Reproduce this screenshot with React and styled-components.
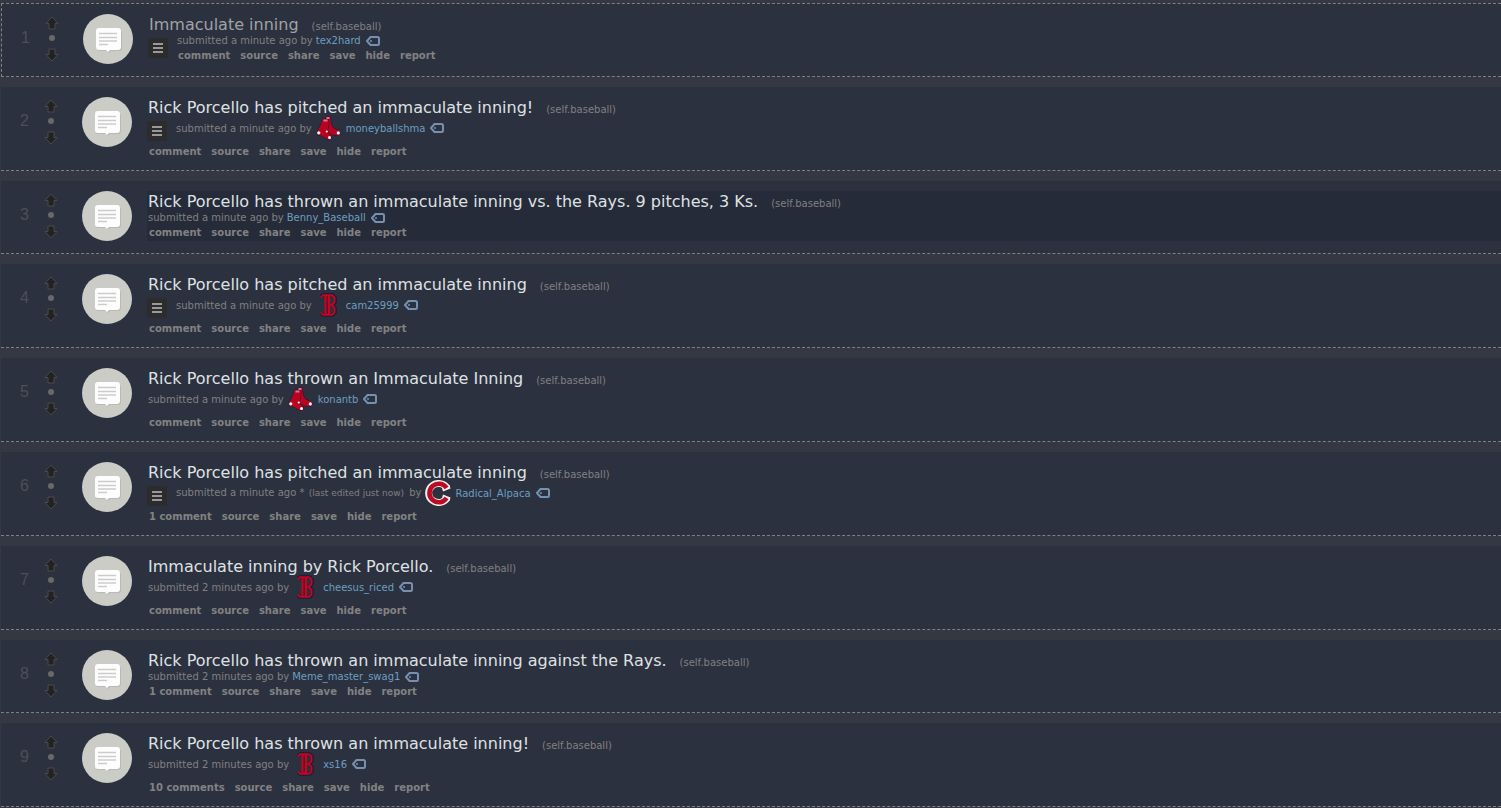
import React from "react";
import styled, { createGlobalStyle } from "styled-components";

const GlobalStyle = createGlobalStyle`
  * {
    box-sizing: border-box;
  }

  body {
    margin: 0;
    background: #333843;
    color: #808080;
    font-family: Verdana, "DejaVu Sans", sans-serif;
    font-size: 10px;
  }

  a {
    color: inherit;
    text-decoration: none;
  }

  button {
    margin: 0;
    padding: 0;
    border: 0;
    background: none;
    cursor: pointer;
  }

  svg {
    display: block;
    flex: none;
  }
`;

const Listing = styled.main`
  display: flex;
  flex-direction: column;
  gap: 10px;
  padding: 3px 0 0 1px;
`;

const Post = styled.article`
  display: flex;
  align-items: flex-start;
  padding: 10px 0 12px;
  background: #2c313f;
  border: 0 dashed #808080;
  border-width: ${(props) => (props.$selected ? "1px 0 1px 1px" : "0 0 1px")};
`;

const Rank = styled.span`
  width: 28px;
  line-height: 48px;
  text-align: right;
  color: #4c4f56;
  font-family: "Liberation Sans", Arial, sans-serif;
  font-size: 16px;
`;

const Votes = styled.div`
  display: flex;
  flex-direction: column;
  align-items: center;
  justify-content: space-between;
  width: 14px;
  height: 46px;
  margin: 2px 24px 0 15px;
`;

const Score = styled.span`
  width: 6px;
  height: 6px;
  margin-bottom: 2px;
  border-radius: 50%;
  background: #696969;
`;

const Thumbnail = styled.a`
  display: flex;
  flex: none;
  align-items: center;
  justify-content: center;
  width: 50px;
  height: 50px;
  margin-right: 15px;
  border-radius: 50%;
  background: #cbccc6;
`;

const Entry = styled.div`
  flex: 1;
  min-width: 0;
  min-height: 50px;
  background: ${(props) => (props.$active ? "#262b39" : "transparent")};
`;

const Title = styled.h2`
  display: flex;
  align-items: baseline;
  height: 19px;
  margin: 0;
  padding-left: 1px;
  color: ${(props) => (props.$read ? "#a0a2a5" : "#dfe1e3")};
  font-size: 16px;
  font-weight: normal;
  line-height: 22px;
  white-space: nowrap;
`;

const Domain = styled.a`
  margin-left: 13px;
  color: #808080;
  font-size: 10px;
`;

const Expando = styled.button`
  float: left;
  display: flex;
  flex-direction: column;
  align-items: center;
  justify-content: center;
  gap: 2px;
  width: 20px;
  height: 20px;
  margin: 5px 8px 0 0;

  && {
    background: #2c2c2d;
  }
`;

const Bar = styled.span`
  width: 10px;
  height: 2px;
  background: #999;
`;

const Tagline = styled.p`
  display: flex;
  align-items: center;
  height: ${(props) => (props.$tall ? "24px" : "15px")};
  margin: 0 0 ${(props) => (props.$tall ? "4px" : "0")};
  padding-left: 1px;
  line-height: 13px;
  white-space: pre;
`;

const Edited = styled.time`
  margin: 0 2px 0 1px;
  font-size: 9px;
`;

const Author = styled.a`
  margin: 0 5px 0 ${(props) => (props.$flair ? "4px" : "3px")};
  color: #6a9fc0;
`;

const Flair = styled.span`
  display: flex;
  justify-content: center;
  width: 26px;
  margin-left: 4px;
`;

const Actions = styled.ul`
  display: flex;
  gap: 10px;
  height: 14px;
  margin: 0;
  padding: 0 0 0 2px;
  color: #828282;
  font-weight: bold;
  line-height: 16px;
  list-style: none;
`;

const ArrowIcon = ({ down }) => (
  <svg width="14" height="14" viewBox="0 0 14 14">
    <path
      d="M7 1L13 7.500H10V13H4V7.500H1Z"
      transform={down ? "rotate(180 7 7)" : undefined}
      fill="#222"
      stroke="#4a4a48"
    />
  </svg>
);

const TextPostIcon = () => (
  <svg width="28" height="28" viewBox="-2 -2 28 28">
    <path d="M3 3H23Q26 3 26 6V21Q26 24 23 24H15L13 26L11 24H3Q1 24 1 22Z" fill="#b9bab5" />
    <path d="M3 1H22Q25 1 25 4V20Q25 23 22 23H14L12 25L10 23H3Q0 23 0 20V4Q0 1 3 1Z" fill="#fdfdfd" />
    <path d="M3 6.500H21M3 10.500H21M3 14H21M3 17.500H12" stroke="#cccdcb" strokeWidth="1.500" />
  </svg>
);

const TagIcon = () => (
  <svg width="14" height="10" viewBox="0 0 14 10">
    <path d="M4.500 1H11.500Q13 1 13 2.500V7.500Q13 9 11.500 9H4.500L1 5Z" fill="none" stroke="#7590b0" strokeWidth="2" />
    <circle cx="5" cy="5" r="1" fill="#7590b0" />
  </svg>
);

const SocksIcon = () => (
  <svg width="26" height="24" viewBox="0 0 26 24">
    <g fill="#b8041f" stroke="#17173c" paintOrder="stroke">
      <path d="M10 1L14 .5L15.500 9Q17 13 22.500 14.500Q25 16.500 23 19Q17 20 13 17L10 15Z" />
      <path d="M6.500 3L12.500 3.500Q13.500 8 12 12Q11 15 12 16.500L15 20Q16.500 22.500 13.500 23.500Q9 22.500 6 20L1.500 18.500Q.5 16 2 14Q5.500 9 6.500 3Z" />
    </g>
    <path d="M7.500 4.500H11.500M10.500 2H13.500" stroke="#d9728a" strokeWidth="2" />
    <circle cx="2.800" cy="16.800" r="1.600" fill="#fff" />
    <circle cx="13.500" cy="21.500" r="1.500" fill="#fff" />
    <circle cx="10.800" cy="15.500" r="1.100" fill="#fff" />
    <circle cx="22.300" cy="16.900" r="1.600" fill="#fff" />
  </svg>
);

const BostonIcon = () => (
  <svg width="18" height="24" viewBox="0 0 18 24">
    <g fill="none">
      <path
        d="M1 4L3 2H12.500L15 4.500V9L12.500 12L15 15V19.500L12.500 22H3L1 20M7 2V22"
        stroke="#171b3d"
        strokeWidth="3.500"
      />
      <path d="M7.200 2V22" stroke="#6b0b2b" strokeWidth="2" />
      <path
        d="M1 4.500L3 2.200H12L14.500 4.500V9L12 11.800H9M12 12.200L14.500 15V19.500L12 21.800H3L1 19.500M5.500 2V22M9 2V22"
        stroke="#c4061f"
        strokeWidth="2"
      />
    </g>
  </svg>
);

const CincinnatiIcon = () => (
  <svg width="26" height="26" viewBox="0 0 26 26">
    <g fill="none">
      <path d="M22.300 8.300A10 9.500 0 1 0 22.300 17.700" stroke="#f4eef1" strokeWidth="7" />
      <path d="M24.500 5L25.500 8.500L18 11.500L17 8ZM24.500 21L25.500 17.500L18 14.500L17 18Z" fill="#f4eef1" />
      <path d="M21.600 8A9.300 9.300 0 1 0 21.600 18" stroke="#bb0b22" strokeWidth="4.600" />
    </g>
  </svg>
);

const flairs = {
  socks: SocksIcon,
  boston: BostonIcon,
  cincinnati: CincinnatiIcon,
};

const posts = [
  { title: "Immaculate inning", author: "tex2hard", expando: true, selected: true },
  { title: "Rick Porcello has pitched an immaculate inning!", author: "moneyballshma", expando: true, flair: "socks" },
  { title: "Rick Porcello has thrown an immaculate inning vs. the Rays. 9 pitches, 3 Ks.", author: "Benny_Baseball", active: true },
  { title: "Rick Porcello has pitched an immaculate inning", author: "cam25999", expando: true, flair: "boston" },
  { title: "Rick Porcello has thrown an Immaculate Inning", author: "konantb", flair: "socks" },
  {
    title: "Rick Porcello has pitched an immaculate inning",
    author: "Radical_Alpaca",
    edited: "(last edited just now)",
    comments: "1 comment",
    expando: true,
    flair: "cincinnati",
  },
  { title: "Immaculate inning by Rick Porcello.", author: "cheesus_riced", age: "2 minutes ago", flair: "boston" },
  {
    title: "Rick Porcello has thrown an immaculate inning against the Rays.",
    author: "Meme_master_swag1",
    age: "2 minutes ago",
    comments: "1 comment",
  },
  {
    title: "Rick Porcello has thrown an immaculate inning!",
    author: "xs16",
    age: "2 minutes ago",
    comments: "10 comments",
    flair: "boston",
  },
];

const PostRow = ({ post, rank }) => {
  const FlairIcon = flairs[post.flair];
  const actions = [post.comments || "comment", "source", "share", "save", "hide", "report"];

  return (
    <Post $selected={post.selected}>
      <Rank>{rank}</Rank>
      <Votes>
        <button aria-label="upvote"><ArrowIcon /></button>
        <Score />
        <button aria-label="downvote"><ArrowIcon down /></button>
      </Votes>
      <Thumbnail href="#" aria-label={post.title}><TextPostIcon /></Thumbnail>
      <Entry $active={post.active}>
        <Title $read={post.selected}>
          <a href="#">{post.title}</a>
          <Domain href="#">(self.baseball)</Domain>
        </Title>
        {post.expando && (
          <Expando aria-label="expand post">
            <Bar />
            <Bar />
            <Bar />
          </Expando>
        )}
        <Tagline $tall={Boolean(FlairIcon)}>
          <span>
            submitted {post.age || "a minute ago"}
            {post.edited && <> * <Edited>{post.edited}</Edited></>} by
          </span>
          {FlairIcon && <Flair><FlairIcon /></Flair>}
          <Author href="#" $flair={Boolean(FlairIcon)}>{post.author}</Author>
          <button aria-label="tag user"><TagIcon /></button>
        </Tagline>
        <Actions>
          {actions.map((action) => (
            <li key={action}><a href="#">{action}</a></li>
          ))}
        </Actions>
      </Entry>
    </Post>
  );
};

const App = () => {
  return (
    <>
      <GlobalStyle />
      <Listing>
        {posts.map((post, index) => (
          <PostRow key={index} post={post} rank={index + 1} />
        ))}
      </Listing>
    </>
  );
};

export default App;
